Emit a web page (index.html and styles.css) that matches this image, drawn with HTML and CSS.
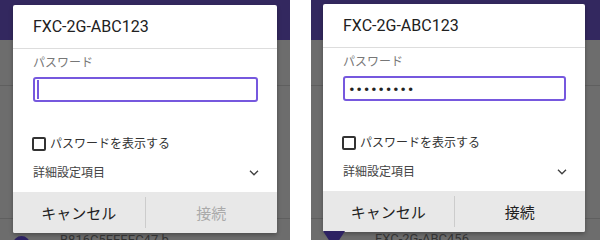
FILE: index.html
```html
<!DOCTYPE html>
<html lang="ja">
<head>
  <meta charset="UTF-8">
  <meta name="viewport" content="width=device-width, initial-scale=1.0">
  <title>Wi-Fi 接続</title>
  <link rel="stylesheet" href="styles.css">
</head>
<body>
  <div class="screens">
    <!-- 入力中 -->
    <div class="screen">
      <div class="dialog">
        <div class="dialog-title">FXC-2G-ABC123</div>
        <div class="dialog-body">
          <div class="field-label">パスワード</div>
          <div class="field-input"><span class="caret"></span></div>
          <label class="check-row"><span class="checkbox"></span>パスワードを表示する</label>
          <div class="advanced-row">
            <span>詳細設定項目</span>
            <svg class="chevron" width="10" height="6" viewBox="0 0 10 6"><polyline points="1,0.8 5,4.8 9,0.8" fill="none" stroke="#444" stroke-width="1.4"/></svg>
          </div>
        </div>
        <div class="dialog-actions">
          <button class="action">キャンセル</button>
          <span class="divider"></span>
          <button class="action disabled">接続</button>
        </div>
      </div>
      <div class="peek">
        <span class="peek-icon circle"></span>
        <span class="peek-text">B816C5FEEEC47 b</span>
      </div>
    </div>

    <!-- 入力済み -->
    <div class="screen second">
      <div class="dialog">
        <div class="dialog-title">FXC-2G-ABC123</div>
        <div class="dialog-body">
          <div class="field-label">パスワード</div>
          <div class="field-input"><span class="dots">•••••••••</span></div>
          <label class="check-row"><span class="checkbox"></span>パスワードを表示する</label>
          <div class="advanced-row">
            <span>詳細設定項目</span>
            <svg class="chevron" width="10" height="6" viewBox="0 0 10 6"><polyline points="1,0.8 5,4.8 9,0.8" fill="none" stroke="#444" stroke-width="1.4"/></svg>
          </div>
        </div>
        <div class="dialog-actions">
          <button class="action">キャンセル</button>
          <span class="divider"></span>
          <button class="action">接続</button>
        </div>
      </div>
      <div class="peek">
        <span class="peek-icon wedge"></span>
        <span class="peek-text">FXC-2G-ABC456</span>
      </div>
    </div>
  </div>
</body>
</html>
```

FILE: styles.css
```css
:root {
  --accent: #7658de;
  --appbar: #33285f;
  --scrim: #6d6d6d;
}
body {
  margin: 0;
  background: #fff;
  font-family: Roboto, "Noto Sans CJK JP", sans-serif;
}
.screens {
  display: flex;
  gap: 21px;
  width: 600px;
  height: 240px;
}
.screen {
  width: 290px;
  height: 240px;
  box-sizing: border-box;
  padding: 5px 13px 0;
  overflow: hidden;
  background:
    linear-gradient(to bottom, transparent 85px, #5f5f5f 85px, #5f5f5f 86px, transparent 86px),
    linear-gradient(to bottom, transparent 218px, #5f5f5f 218px, #5f5f5f 219px, transparent 219px),
    linear-gradient(to bottom, var(--appbar) 40px, var(--scrim) 40px);
}
.screen.second {
  width: 289px;
  padding: 4px 15px 0 12px;
}
.dialog {
  background: #fff;
  border-radius: 2px;
  overflow: hidden;
  box-shadow: 0 2px 4px rgba(0,0,0,0.3);
}
.dialog-title {
  height: 43px;
  display: flex;
  align-items: center;
  padding-left: 20px;
  font-size: 16px;
  color: #212121;
  border-bottom: 1px solid #ddd;
}
.dialog-body {
  padding: 6px 19px 0 20px;
}
.field-label {
  font-size: 12px;
  line-height: 16px;
  color: #777;
}
.field-input {
  margin-top: 6px;
  height: 25px;
  box-sizing: border-box;
  border: 2px solid var(--accent);
  border-radius: 3px;
  display: flex;
  align-items: center;
  padding-left: 2px;
}
.caret {
  width: 2px;
  height: 19px;
  background: var(--accent);
}
.dots {
  padding-left: 2px;
  font-size: 17px;
  letter-spacing: 1.6px;
  color: #222;
}
.check-row {
  margin-top: 34px;
  display: flex;
  align-items: center;
  gap: 4px;
  font-size: 12px;
  line-height: 16px;
  color: #333;
}
.checkbox {
  width: 14px;
  height: 14px;
  box-sizing: border-box;
  margin-left: -1px;
  border: 2px solid #333;
  border-radius: 2px;
}
.advanced-row {
  margin-top: 13px;
  display: flex;
  justify-content: space-between;
  align-items: center;
  font-size: 12px;
  line-height: 16px;
  color: #444;
}
.chevron {
  margin-right: -1px;
}
.dialog-actions {
  margin-top: 11px;
  height: 41px;
  display: flex;
  align-items: center;
  background: #e8e8e8;
}
.action {
  flex: 1;
  height: 100%;
  border: none;
  background: none;
  padding: 0;
  font-family: inherit;
  font-size: 15px;
  color: #222;
}
.action.disabled {
  color: #aaa;
}
.divider {
  width: 1px;
  height: 31px;
  background: #ccc;
}
.peek {
  display: flex;
  align-items: flex-start;
  gap: 30px;
}
.peek-icon {
  flex: none;
  width: 17px;
  height: 17px;
  margin-top: 3px;
  background: #2d2262;
}
.peek-icon.circle {
  border-radius: 50%;
}
.peek-icon.wedge {
  width: 22px;
  margin-top: -1px;
  clip-path: polygon(0 0, 100% 0, 50% 100%);
}
.peek-text {
  font-size: 13px;
  line-height: 16px;
  margin-top: -1px;
  color: #333;
}
```
